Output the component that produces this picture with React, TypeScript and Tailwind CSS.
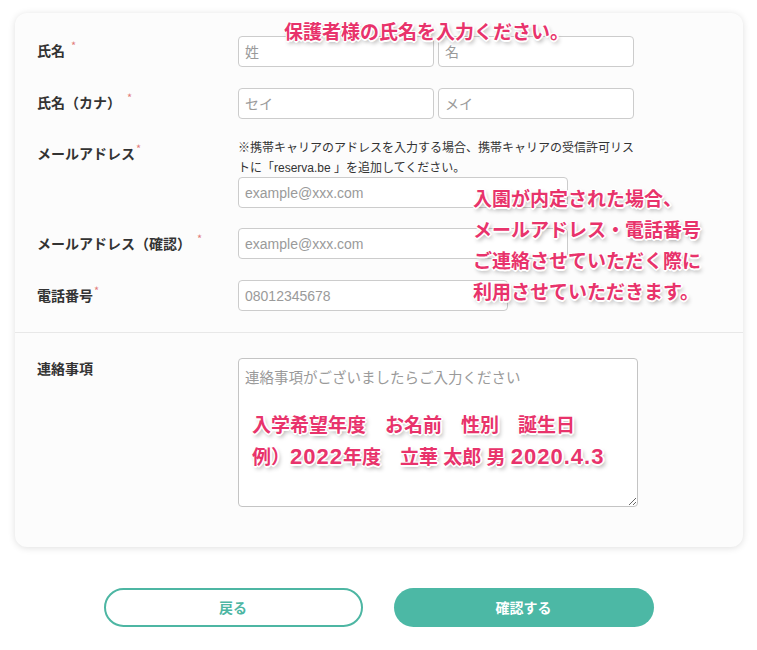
import React from "react";

const font = "font-['Liberation_Sans','Noto_Sans_CJK_JP',sans-serif]";
const inputCls =
  "h-[31px] rounded-[4px] border border-[#cccccc] bg-white px-[6px] text-[14px] text-[#333] outline-none placeholder:text-[#9a9a9a] " +
  font;
const annot =
  "absolute font-['Liberation_Sans','Noto_Sans_CJK_JP',sans-serif] font-bold text-[19px] leading-[31px] text-[#e8336b] whitespace-nowrap [text-shadow:1px_1px_0_#fff,-1px_-1px_0_#fff,1px_-1px_0_#fff,-1px_1px_0_#fff,0_2px_0_#fff,2px_0_0_#fff,2px_3px_4px_rgba(0,0,0,0.38)]";
const num = "text-[22px] leading-[31px] tracking-[1px]";

function Star({ space }: { space?: boolean }) {
  return (
    <span
      className={
        "relative -top-[6px] text-[11px] font-normal text-[#e27b7b] " +
        (space ? "ml-[6px]" : "ml-[1px]")
      }
    >
      *
    </span>
  );
}

function Label({
  children,
  pt = "pt-[4px]",
}: {
  children: React.ReactNode;
  pt?: string;
}) {
  return (
    <div
      className={
        "w-[201px] shrink-0 text-[14px] font-bold leading-[20px] text-[#333] " +
        pt
      }
    >
      {children}
    </div>
  );
}

export default function App() {
  return (
    <div className="min-h-[650px] w-full bg-white pt-[13px] pb-[22px] font-['Noto_Sans_CJK_JP',sans-serif]">
      <div className="relative ml-[15px] w-[728px] rounded-[12px] bg-[#fcfcfc] shadow-[0_1px_7px_rgba(0,0,0,0.13)]">
        <div className="flex flex-col px-[22px] pt-[23px] pb-[21px]">
          {/* 氏名 */}
          <div className="flex">
            <Label>
              氏名
              <Star space />
            </Label>
            <div className="flex gap-[4px]">
              <input className={inputCls + " w-[196px]"} placeholder="姓" />
              <input className={inputCls + " w-[196px]"} placeholder="名" />
            </div>
          </div>
          {/* 氏名（カナ） */}
          <div className="mt-[21px] flex">
            <Label>
              氏名（カナ）
              <Star space />
            </Label>
            <div className="flex gap-[4px]">
              <input className={inputCls + " w-[196px]"} placeholder="セイ" />
              <input className={inputCls + " w-[196px]"} placeholder="メイ" />
            </div>
          </div>
          {/* メールアドレス */}
          <div className="mt-[18px] flex">
            <Label pt="pt-[6px]">
              メールアドレス
              <Star />
            </Label>
            <div className="flex flex-col">
              <p className="h-[40px] text-[12px] leading-[20px] text-[#333] font-['Noto_Sans_CJK_JP',sans-serif]">
                ※携帯キャリアのアドレスを入力する場合、携帯キャリアの受信許可リス
                <br />
                トに「
                <span className="font-['Liberation_Sans',sans-serif]">reserva.be </span>
                」を追加してください。
              </p>
              <input
                className={inputCls + " w-[330px]"}
                placeholder="example@xxx.com"
              />
            </div>
          </div>
          {/* メールアドレス（確認） */}
          <div className="mt-[20px] flex">
            <Label pt="pt-[5px]">
              メールアドレス（確認）
              <Star space />
            </Label>
            <input
              className={inputCls + " w-[330px]"}
              placeholder="example@xxx.com"
            />
          </div>
          {/* 電話番号 */}
          <div className="mt-[21px] flex">
            <Label pt="pt-[5px]">
              電話番号
              <Star />
            </Label>
            <input
              className={inputCls + " w-[270px]"}
              placeholder="08012345678"
            />
          </div>
        </div>

        <div className="flex border-t border-[#e8e8e8] px-[22px] pt-[25px] pb-[40px]">
          <Label pt="pt-[0px]">連絡事項</Label>
          <textarea
            className="block h-[149px] w-[400px] resize-y rounded-[4px] border border-[#c4c4c4] bg-white px-[6px] py-[6px] text-[14.5px] leading-[24px] text-[#333] outline-none placeholder:text-[#9a9a9a] font-['Noto_Sans_CJK_JP',sans-serif]"
            placeholder="連絡事項がございましたらご入力ください"
          />
        </div>

        {/* annotations */}
        <div className={annot + " left-[269px] top-[4px]"}>
          保護者様の氏名を入力ください。
        </div>
        <div className={annot + " left-[458px] top-[171px]"}>
          入園が内定された場合、
          <br />
          メールアドレス・電話番号
          <br />
          ご連絡させていただく際に
          <br />
          利用させていただきます。
        </div>
        <div className={annot + " left-[237px] top-[397px]"}>
          入学希望年度　お名前　性別　誕生日
          <br />
          例）<span className={num}>2022</span>年度　立華 太郎 男{" "}
          <span className={num}>2020.4.3</span>
        </div>
      </div>

      <div className="mt-[41px] flex justify-center gap-[31px]">
        <button className="h-[39px] w-[259px] rounded-full border-2 border-[#4db6a3] bg-white text-[14px] font-bold text-[#4db6a3]">
          戻る
        </button>
        <button className="h-[39px] w-[260px] rounded-full bg-[#4cb8a5] text-[14px] font-bold text-white">
          確認する
        </button>
      </div>
    </div>
  );
}
